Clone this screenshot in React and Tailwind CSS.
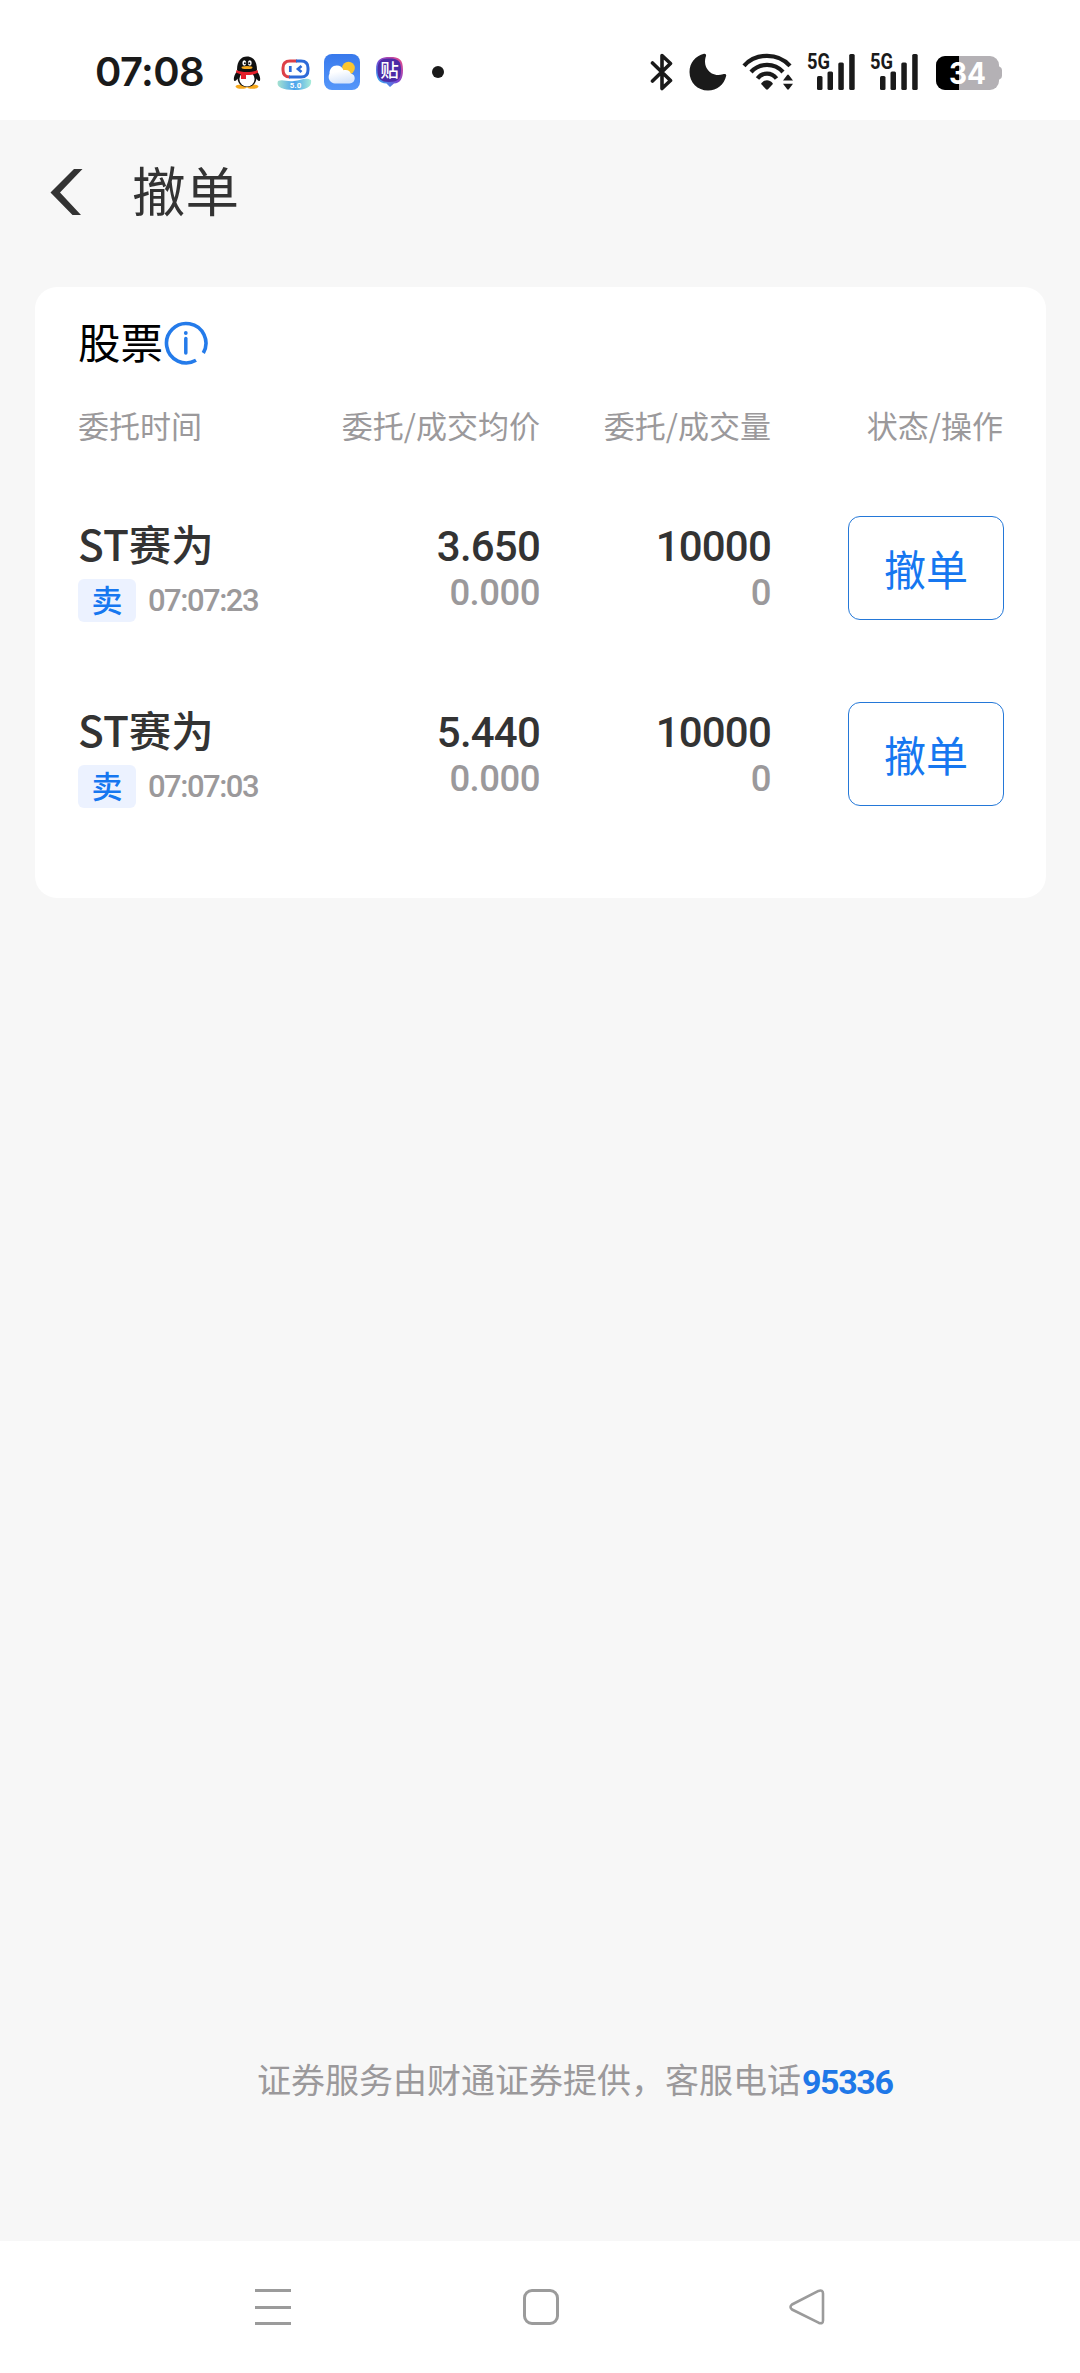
import React from 'react';

const CJK = "font-['Noto_Sans_CJK_SC',sans-serif]";
const NUM = "font-['Roboto','Noto_Sans_CJK_SC',sans-serif]";

const orders = [
  { name: 'ST赛为', side: '卖', time: '07:07:23', price: '3.650', avg: '0.000', qty: '10000', done: '0' },
  { name: 'ST赛为', side: '卖', time: '07:07:03', price: '5.440', avg: '0.000', qty: '10000', done: '0' },
];

function Penguin() {
  return (
    <svg className="ml-[27px] h-9 w-8 shrink-0" viewBox="0 0 32 36">
      <ellipse cx="9.5" cy="32.6" rx="6" ry="2.2" fill="#f6a81c" />
      <ellipse cx="20.500" cy="32.6" rx="6" ry="2.2" fill="#f6a81c" />
      <path d="M5 17c-3 4-4 9-2.500 10 1 .5 2.200-1.200 3-2.500C6 29 9 33 15 33s9-4 9.500-8.500c.8 1.300 2 3 3 2.500C29 26 28 21 25 17z" fill="#111" />
      <ellipse cx="15" cy="25" rx="7.600" ry="7.600" fill="#fff" />
      <path d="M5 16C5 7 9 2.500 15 2.500s10 4.500 10 13.500c0 3-20 3-20 0z" fill="#111" />
      <ellipse cx="12.300" cy="9" rx="1.900" ry="2.700" fill="#fff" />
      <ellipse cx="17.800" cy="9" rx="1.900" ry="2.700" fill="#fff" />
      <circle cx="12.900" cy="9.200" r="1" fill="#111" />
      <circle cx="17.300" cy="9.200" r="1" fill="#111" />
      <ellipse cx="15" cy="13.600" rx="5.500" ry="1.500" fill="#f6a81c" />
      <path d="M4.500 16c5 2.800 16 2.800 21 0l.6 2.600c-4 2.200-8 2.600-12.100 2.400v4H9v-4.600L4 18.500z" fill="#e5202b" />
    </svg>
  );
}

function Robot() {
  return (
    <svg className="ml-[13px] h-9 w-9 shrink-0" viewBox="0 0 36 36">
      <defs>
        <linearGradient id="wave" x1="0" x2="1">
          <stop offset="0" stopColor="#a5e2d0" />
          <stop offset=".5" stopColor="#4aa3ee" />
          <stop offset="1" stopColor="#a8ecd8" />
        </linearGradient>
      </defs>
      <path d="M1 27c5-2 9 1 16 0s12-4 17-1c1 6-3 10-17 10S-1 32 1 27z" fill="url(#wave)" />
      <path d="M20 7H13q-7 0-7 7v2q0 7 7 7" fill="none" stroke="#dd4048" strokeWidth="3" />
      <path d="M19 7h5q7 0 7 7v2q0 7-7 7H12" fill="none" stroke="#2d6ad8" strokeWidth="3" />
      <path d="M13.300 12v6M24.500 12l-3.500 3 3.500 3" fill="none" stroke="#2d6ad8" strokeWidth="2.700" />
      <text x="18.500" y="33.500" textAnchor="middle" fill="#fff" fontSize="8" fontWeight="700" fontFamily="Roboto, sans-serif">5.0</text>
    </svg>
  );
}

function Weather() {
  return (
    <svg className="ml-[11px] h-9 w-9 shrink-0" viewBox="0 0 36 36">
      <defs>
        <linearGradient id="sky" x2="0" y2="1">
          <stop offset="0" stopColor="#3879ec" />
          <stop offset="1" stopColor="#5597fa" />
        </linearGradient>
        <linearGradient id="cloud" x2=".3" y2="1">
          <stop offset=".4" stopColor="#fff" />
          <stop offset="1" stopColor="#d8e6fb" />
        </linearGradient>
      </defs>
      <rect width="36" height="36" rx="8" fill="url(#sky)" />
      <circle cx="24.500" cy="14" r="6.300" fill="#fcc62f" />
      <path d="M11 29.500a6.500 6.500 0 0 1-5.500-9.700c-.2-5 3-8.300 7.300-8.300 3.400 0 5.700 2 6.700 4.700 1-.4 1.600-.3 2.200-.2 3 0 4.300 1.500 5 3.500 3 .5 4 2.500 4 4.800 0 3-2.200 5.200-5.200 5.200z" fill="url(#cloud)" />
    </svg>
  );
}

function Tieba() {
  return (
    <svg className="ml-[15px] h-9 w-[30px] shrink-0" viewBox="0 0 30 36">
      <defs>
        <linearGradient id="ring" x1="1" x2="0" y2="1">
          <stop offset="0" stopColor="#f04b80" />
          <stop offset=".5" stopColor="#7b45d2" />
          <stop offset="1" stopColor="#20c8fb" />
        </linearGradient>
      </defs>
      <path d="M15 3c9 0 13 2 13 13 0 9-3 13-9 13.500L15 33l-3.500-3.500C4 29 1 25 1 16 1 5 6 3 15 3z" fill="url(#ring)" />
      <path d="M14 4.500c9 0 12 2 12 11.500s-4 12-12 12-11.500-3-11.500-12S6 4.500 14 4.500z" fill="#4c2ba6" />
      <text x="14.500" y="23" textAnchor="middle" fill="#fff" fontSize="18.500" fontWeight="500" fontFamily="Noto Sans CJK SC, sans-serif">贴</text>
    </svg>
  );
}

function Bluetooth() {
  return (
    <svg className="h-[38px] w-6 shrink-0" viewBox="0 0 24 38" fill="none" stroke="#1a1a1a" strokeWidth="3.600" strokeLinecap="round" strokeLinejoin="round">
      <path d="M2.500 10 20.500 27.500 12 35.500V2.500L20.500 10.500 2.500 28" />
    </svg>
  );
}

function Moon() {
  return (
    <svg className="ml-[15px] h-[38px] w-[38px] shrink-0" viewBox="0 0 38 38">
      <path d="M15 .8c1.500-.3 2.500.8 2 2.200-4 11 5 22 17 18.300 2-.6 3.600.1 3.200 1.500C35 32 28 37.500 19 37.500 8.500 37.500.5 29.500.5 19 .5 10 6.500 2.800 15 .8z" fill="#1a1a1a" />
    </svg>
  );
}

function Wifi() {
  return (
    <svg className="ml-[15px] h-[38px] w-[52px] shrink-0" viewBox="0 0 52 38">
      <g fill="none" stroke="#1a1a1a" strokeWidth="4.200" strokeLinecap="butt">
        <path d="M2 12.800C14-.5 36-.5 48 12.800" />
        <path d="M9 19c8.500-9.500 23.500-9.500 32 0" />
        <path d="M15.500 25.500c5-6.500 14-6.500 19 0" />
      </g>
      <path d="M19.500 30c3-3.800 8-3.800 11 0 .5.600.4 1-.1 1.500L26 36.300c-.6.600-1.400.6-2 0l-4.400-4.800c-.5-.5-.6-.9-.1-1.500z" fill="#1a1a1a" />
      <path d="M41 27.500h10l-4-5.300q-1-1.200-2 0zM41 30.800h10l-4 5.300q-1 1.200-2 0z" fill="#1a1a1a" />
    </svg>
  );
}

function Signal() {
  return (
    <div className="w-12 shrink-0">
      <svg className="h-[38px] w-12 overflow-visible" viewBox="0 0 48 38" fill="#1a1a1a">
        <text x="0" y="15.600" fontSize="21.500" fontWeight="700" fontFamily="Roboto, sans-serif" textLength="23" lengthAdjust="spacingAndGlyphs">5G</text>
        <rect x="10" y="23" width="5.500" height="14" rx="1.500" />
        <rect x="20.500" y="18.500" width="5.500" height="18.500" rx="1.500" />
        <rect x="31.300" y="9.500" width="5.500" height="27.500" rx="1.500" />
        <rect x="42.200" y="1" width="5.500" height="36" rx="1.500" />
      </svg>
    </div>
  );
}

function Battery() {
  return (
    <svg className="ml-[18px] h-[38px] w-[67px] shrink-0" viewBox="0 0 67 38">
      <defs>
        <clipPath id="cell"><rect y="3" width="63" height="34" rx="9" /></clipPath>
      </defs>
      <path d="M62 13.500h1.500q2.500 1 2.500 3.500v6q0 2.500-2.500 3.500H62z" fill="#b4b1b5" />
      <g clipPath="url(#cell)">
        <rect y="3" width="63" height="34" fill="#b4b1b5" />
        <rect y="3" width="23" height="34" fill="#000" />
      </g>
      <text x="13" y="31.300" fill="#fff" fontSize="30" fontWeight="700" fontFamily="Inter, sans-serif" textLength="37" lengthAdjust="spacingAndGlyphs">34</text>
    </svg>
  );
}

function InfoIcon() {
  return (
    <svg className="ml-[1px] h-11 w-11" viewBox="0 0 44 44" fill="none" stroke="#247bea" strokeLinecap="butt">
      <path d="M39.300 32A19.700 19.700 0 1 0 32 39.300" strokeWidth="3.600" />
      <path d="M21.800 17.500v14.500" strokeWidth="3.500" strokeLinecap="round" />
      <circle cx="21.800" cy="12" r="1.900" fill="#247bea" stroke="none" />
    </svg>
  );
}

function Row({ o }) {
  return (
    <div className="flex h-[186px] items-start pr-[42px] pl-[43px]">
      <div className="w-[220px]">
        <div className={`${CJK} -mt-[2px] h-[66px] text-[42.500px] leading-[58px] font-medium text-[#333]`}>{o.name}</div>
        <div className="-mt-px flex items-center">
          <span className={`${CJK} h-[43px] w-[58px] rounded-[6px] bg-[#ecf2ff] text-center text-[31px] leading-[39px] font-medium text-[#1677f0]`}>{o.side}</span>
          <span className={`${NUM} ml-[12px] text-[31px] leading-[43px] font-medium tracking-[-1.500px] text-[#9b999b]`}>{o.time}</span>
        </div>
      </div>
      <div className={`${NUM} w-[242px] pt-[8px] text-right font-medium`}>
        <div className="text-[42px] leading-[46px] tracking-[-0.800px] text-[#333]">{o.price}</div>
        <div className="text-[36.500px] leading-[46px] tracking-[-0.500px] text-[#9b999b]">{o.avg}</div>
      </div>
      <div className={`${NUM} w-[231px] pt-[8px] text-right font-medium`}>
        <div className="text-[42px] leading-[46px] tracking-[-0.800px] text-[#333]">{o.qty}</div>
        <div className="text-[36.500px] leading-[46px] tracking-[-0.500px] text-[#9b999b]">{o.done}</div>
      </div>
      <button className={`${CJK} ml-auto flex h-[104px] w-[156px] items-center justify-center rounded-[12px] border border-[#2478d8] text-[42px] leading-none font-normal text-[#1677f0]`}>撤单</button>
    </div>
  );
}

export default function App() {
  return (
    <div className="flex h-[2373px] w-[1080px] flex-col overflow-hidden bg-[#f7f7f7]">
      <header className="flex h-[120px] shrink-0 items-start bg-white pt-[53px]">
        <div className="flex w-[630px] items-center pl-[95px]">
          <span className="w-[110px] text-[40px] leading-[38px] font-semibold tracking-[-0.600px] whitespace-nowrap text-[#1a1a1a] font-['Inter',sans-serif]">07:08</span>
          <Penguin />
          <Robot />
          <Weather />
          <Tieba />
          <span className="ml-[27px] size-3 rounded-full bg-[#1a1a1a]" />
        </div>
        <div className="flex items-start pl-[20px]">
          <Bluetooth />
          <Moon />
          <Wifi />
          <div className="ml-[13px] flex gap-[15px]">
            <Signal />
            <Signal />
          </div>
          <Battery />
        </div>
      </header>

      <div className="flex h-[167px] shrink-0 items-start pt-[42px] pl-[50px]">
        <svg className="mt-[6px] h-[50px] w-[34px]" viewBox="0 0 34 50">
          <path d="M24 1h8.500L10 24.500 31 47h-8.500L.5 24.500z" fill="#333" />
        </svg>
        <h1 className={`${CJK} ml-[48px] text-[53.500px] leading-[54px] font-normal text-[#333]`}>撤单</h1>
      </div>

      <main className="mr-[34px] ml-[35px] h-[611px] shrink-0 rounded-[22px] bg-white">
        <div className="flex h-[111px] items-start pt-[34px] pl-[43px]">
          <h2 className={`${CJK} -mt-[2px] text-[42.500px] leading-[44px] font-normal text-black`}>股票</h2>
          <InfoIcon />
        </div>
        <div className={`${CJK} flex h-[118px] pt-[5px] pr-[43px] pl-[43px] text-[31px] leading-[44px] font-normal text-[#9b999b]`}>
          <span className="w-[220px]">委托时间</span>
          <span className="w-[242px] text-right">委托/成交均价</span>
          <span className="w-[231px] text-right">委托/成交量</span>
          <span className="ml-auto">状态/操作</span>
        </div>
        {orders.map((o) => <Row key={o.time} o={o} />)}
      </main>

      <footer className="mt-auto flex h-[181px] shrink-0 items-start pl-[257px]">
        <span className={`${CJK} -mt-px text-[34px] leading-[40px] text-[#9b999b]`}>证券服务由财通证券提供，客服电话</span>
        <span className={`${NUM} ml-px mt-[2px] text-[34px] leading-[40px] font-bold tracking-[-1.400px] text-[#1f78e8]`}>95336</span>
      </footer>

      <nav className="flex h-[132px] shrink-0 items-start bg-white pt-[48px] pl-[255px]">
        <div className="flex h-9 w-9 flex-col justify-between">
          <span className="h-[3px] bg-[#9b9b9b]" />
          <span className="h-[3px] bg-[#9b9b9b]" />
          <span className="h-[3px] bg-[#9b9b9b]" />
        </div>
        <div className="ml-[232px] h-9 w-9 rounded-[9px] border-3 border-[#9b9b9b]" />
        <svg className="ml-[230px] h-9 w-9" viewBox="0 0 36 36" fill="none" stroke="#9b9b9b" strokeWidth="2.600" strokeLinejoin="round">
          <path d="M3 15.500 29.500 1.900Q34 .5 34 4.500v27q0 4-4.500 2.200L3 20.500q-3-2.500 0-5z" />
        </svg>
      </nav>
    </div>
  );
}
